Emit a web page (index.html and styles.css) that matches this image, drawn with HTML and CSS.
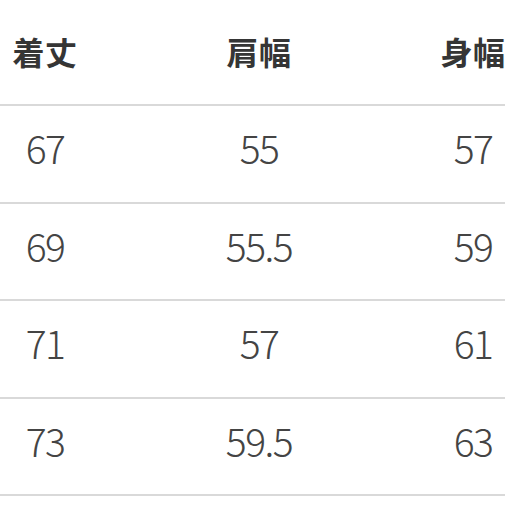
FILE: index.html
```html
<!DOCTYPE html>
<html lang="ja">
<head>
<meta charset="utf-8">
<link rel="stylesheet" href="styles.css">
</head>
<body>
<div class="sheet">
  <div class="row head">
    <div class="cell">着丈</div>
    <div class="cell">肩幅</div>
    <div class="cell">身幅</div>
  </div>
  <div class="row">
    <div class="cell">67</div>
    <div class="cell">55</div>
    <div class="cell">57</div>
  </div>
  <div class="row">
    <div class="cell">69</div>
    <div class="cell">55.5</div>
    <div class="cell">59</div>
  </div>
  <div class="row">
    <div class="cell">71</div>
    <div class="cell">57</div>
    <div class="cell">61</div>
  </div>
  <div class="row">
    <div class="cell">73</div>
    <div class="cell">59.5</div>
    <div class="cell">63</div>
  </div>
</div>
</body>
</html>
```

FILE: styles.css
```css
html, body {
  margin: 0;
  padding: 0;
  background: #ffffff;
  overflow: hidden;
  width: 505px;
  height: 505px;
}

.sheet {
  display: flex;
  flex-direction: column;
  width: 505px;
  overflow: hidden;
}

.row {
  display: grid;
  grid-template-columns: 214px 214px 214px;
  margin-left: -62px;
  height: 95.5px;
  align-items: center;
  border-bottom: 2.5px solid #d9d9d9;
  width: 642px;
  font-family: "Noto Sans CJK JP", "Noto Sans", sans-serif;
  font-weight: 200;
  font-size: 39px;
  letter-spacing: -1.5px;
  color: #444444;
}

.row .cell {
  text-align: center;
  line-height: 1;
  padding-bottom: 12px;
}

.row.head {
  height: 104px;
  font-size: 32px;
  font-weight: 700;
  letter-spacing: 0.5px;
  color: #353535;
}

.row.head .cell {
  padding-bottom: 2px;
}
```
